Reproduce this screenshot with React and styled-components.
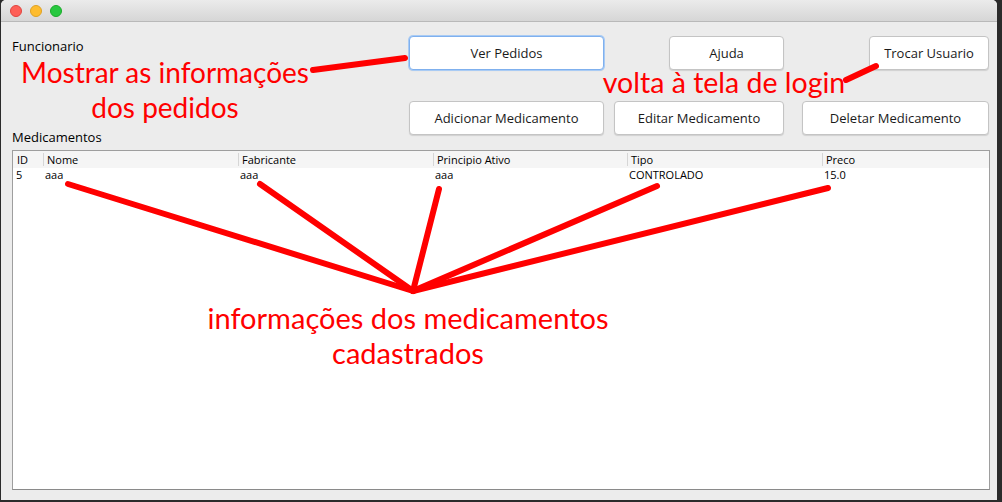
import styled, { createGlobalStyle } from "styled-components";

const GlobalStyle = createGlobalStyle`
  html, body {
    margin: 0;
    padding: 0;
    background: #2b2b2b;
  }
  body {
    font-family: "Open Sans", "Liberation Sans", sans-serif;
    overflow: hidden;
  }
`;

const columns = [
  { key: "id", label: "ID", width: "30px" },
  { key: "nome", label: "Nome", width: "195px" },
  { key: "fabricante", label: "Fabricante", width: "195px" },
  { key: "principio", label: "Principio Ativo", width: "194px" },
  { key: "tipo", label: "Tipo", width: "195px" },
  { key: "preco", label: "Preco", width: "1fr" },
];

const rows = [
  {
    id: "5",
    nome: "aaa",
    fabricante: "aaa",
    principio: "aaa",
    tipo: "CONTROLADO",
    preco: "15.0",
  },
];

const gridTemplate = columns.map((c) => c.width).join(" ");

// red marker strokes drawn over the screenshot
const strokes = [
  [313, 70, 405, 58],
  [846, 80, 876, 66],
  [68, 184, 413, 291],
  [260, 184, 413, 291],
  [439, 189, 413, 291],
  [657, 186, 413, 291],
  [828, 188, 413, 291],
];

export default function App() {
  return (
    <>
      <GlobalStyle />
      <Window>
        <TitleBar>
          <Light $color="#fe5f57" $border="#e0443e" />
          <Light $color="#febc2e" $border="#dea123" />
          <Light $color="#28c840" $border="#1aab29" />
        </TitleBar>
        <Content>
          <Header>
            <LeftCol>
              <Label $top>Funcionario</Label>
              <Label>Medicamentos</Label>
            </LeftCol>
            <ButtonArea>
              <ButtonRow>
                <Button $w={195} $focused>
                  Ver Pedidos
                </Button>
                <Button $w={115} $ml={65}>
                  Ajuda
                </Button>
                <Button $w={120} $ml={85}>
                  Trocar Usuario
                </Button>
              </ButtonRow>
              <ButtonRow>
                <Button $w={195}>Adicionar Medicamento</Button>
                <Button $w={170} $ml={10}>
                  Editar Medicamento
                </Button>
                <Button $w={187} $ml={18}>
                  Deletar Medicamento
                </Button>
              </ButtonRow>
            </ButtonArea>
          </Header>
          <Table>
            <HeadRow>
              {columns.map((c, i) => (
                <HeadCell key={c.key} $first={i === 0}>
                  {c.label}
                </HeadCell>
              ))}
            </HeadRow>
            {rows.map((r) => (
              <DataRow key={r.id}>
                {columns.map((c, i) => (
                  <DataCell key={c.key} $first={i === 0}>
                    {r[c.key]}
                  </DataCell>
                ))}
              </DataRow>
            ))}
          </Table>
        </Content>

        <Marks width="996" height="500" viewBox="1 0 996 500">
          {strokes.map(([x1, y1, x2, y2], i) => (
            <line
              key={i}
              x1={x1}
              y1={y1}
              x2={x2}
              y2={y2}
              stroke="#ff0000"
              strokeWidth="6"
              strokeLinecap="round"
            />
          ))}
        </Marks>
        <Note $x={-4} $y={55} $w={336} $size={28}>
          Mostrar as informações
          <br />
          dos pedidos
        </Note>
        <Note $x={583} $y={65} $w={280} $size={28.5}>
          volta à tela de login
        </Note>
        <Note $x={187} $y={300} $w={440} $size={29}>
          informações dos medicamentos
          <br />
          cadastrados
        </Note>
      </Window>
    </>
  );
}

const Window = styled.div`
  position: relative;
  margin-left: 1px;
  width: 996px;
  height: 500px;
  background: #ececec;
  border-radius: 5px 5px 0 0;
  overflow: hidden;
  display: flex;
  flex-direction: column;
`;

const TitleBar = styled.div`
  height: 22px;
  flex-shrink: 0;
  box-sizing: border-box;
  display: flex;
  align-items: center;
  gap: 8px;
  padding: 0 0 0 9px;
  background: linear-gradient(#ebebeb, #d6d6d6);
  border-bottom: 1px solid #b9b9b9;
`;

const Light = styled.span`
  width: 12px;
  height: 12px;
  border-radius: 50%;
  box-sizing: border-box;
  background: ${(p) => p.$color};
  border: 0.5px solid ${(p) => p.$border};
`;

const Content = styled.div`
  flex: 1;
  display: flex;
  flex-direction: column;
  padding: 14px 7px 10px 11px;
  min-height: 0;
  color: #000;
`;

const Header = styled.div`
  display: grid;
  grid-template-columns: 396px 1fr;
`;

const LeftCol = styled.div`
  display: flex;
  flex-direction: column;
  justify-content: space-between;
  padding: 2px 0 5px 0;
`;

const Label = styled.div`
  font-size: 13px;
  line-height: 16px;
  margin-top: ${(p) => (p.$top ? "0" : "auto")};
`;

const ButtonArea = styled.div`
  display: flex;
  flex-direction: column;
  gap: 31px;
  padding: 0 2px 15px 1px;
`;

const ButtonRow = styled.div`
  display: flex;
  align-items: center;
`;

const Button = styled.button`
  width: ${(p) => p.$w}px;
  margin-left: ${(p) => p.$ml || 0}px;
  height: 34px;
  box-sizing: border-box;
  background: #fff;
  border: 1px solid ${(p) => (p.$focused ? "#7fb0ee" : "#c4c4c4")};
  box-shadow: ${(p) =>
    p.$focused
      ? "0 0 0 1px #a9cbf4, 0 1px 1px rgba(0,0,0,0.12)"
      : "0 1px 1px rgba(0,0,0,0.12)"};
  border-radius: 4px;
  font-family: "Open Sans", "Liberation Sans", sans-serif;
  font-size: 13px;
  color: #1a1a1a;
  padding: 0;
  cursor: default;
`;

const Table = styled.div`
  flex: 1;
  background: #fff;
  border: 1px solid #9e9e9e;
  border-bottom-color: #8a8a8a;
  font-size: 11px;
  line-height: 13px;
`;

const HeadRow = styled.div`
  display: grid;
  grid-template-columns: ${gridTemplate};
  height: 17px;
  align-items: center;
  background: #f5f5f5;
`;

const HeadCell = styled.div`
  height: 13px;
  padding-left: ${(p) => (p.$first ? "4px" : "3px")};
  border-left: ${(p) => (p.$first ? "none" : "1px solid #d6d6d6")};
  white-space: nowrap;
  overflow: hidden;
`;

const DataRow = styled.div`
  display: grid;
  grid-template-columns: ${gridTemplate};
  height: 13px;
  align-items: center;
`;

const DataCell = styled.div`
  padding-left: ${(p) => (p.$first ? "3px" : "2px")};
  white-space: nowrap;
`;

const Marks = styled.svg`
  position: absolute;
  left: 0;
  top: 0;
  pointer-events: none;
`;

const Note = styled.div`
  position: absolute;
  left: ${(p) => p.$x}px;
  top: ${(p) => p.$y}px;
  width: ${(p) => p.$w}px;
  text-align: center;
  color: #ff0000;
  font-family: Lato, "Open Sans", sans-serif;
  font-size: ${(p) => p.$size}px;
  line-height: 35px;
  pointer-events: none;
`;
